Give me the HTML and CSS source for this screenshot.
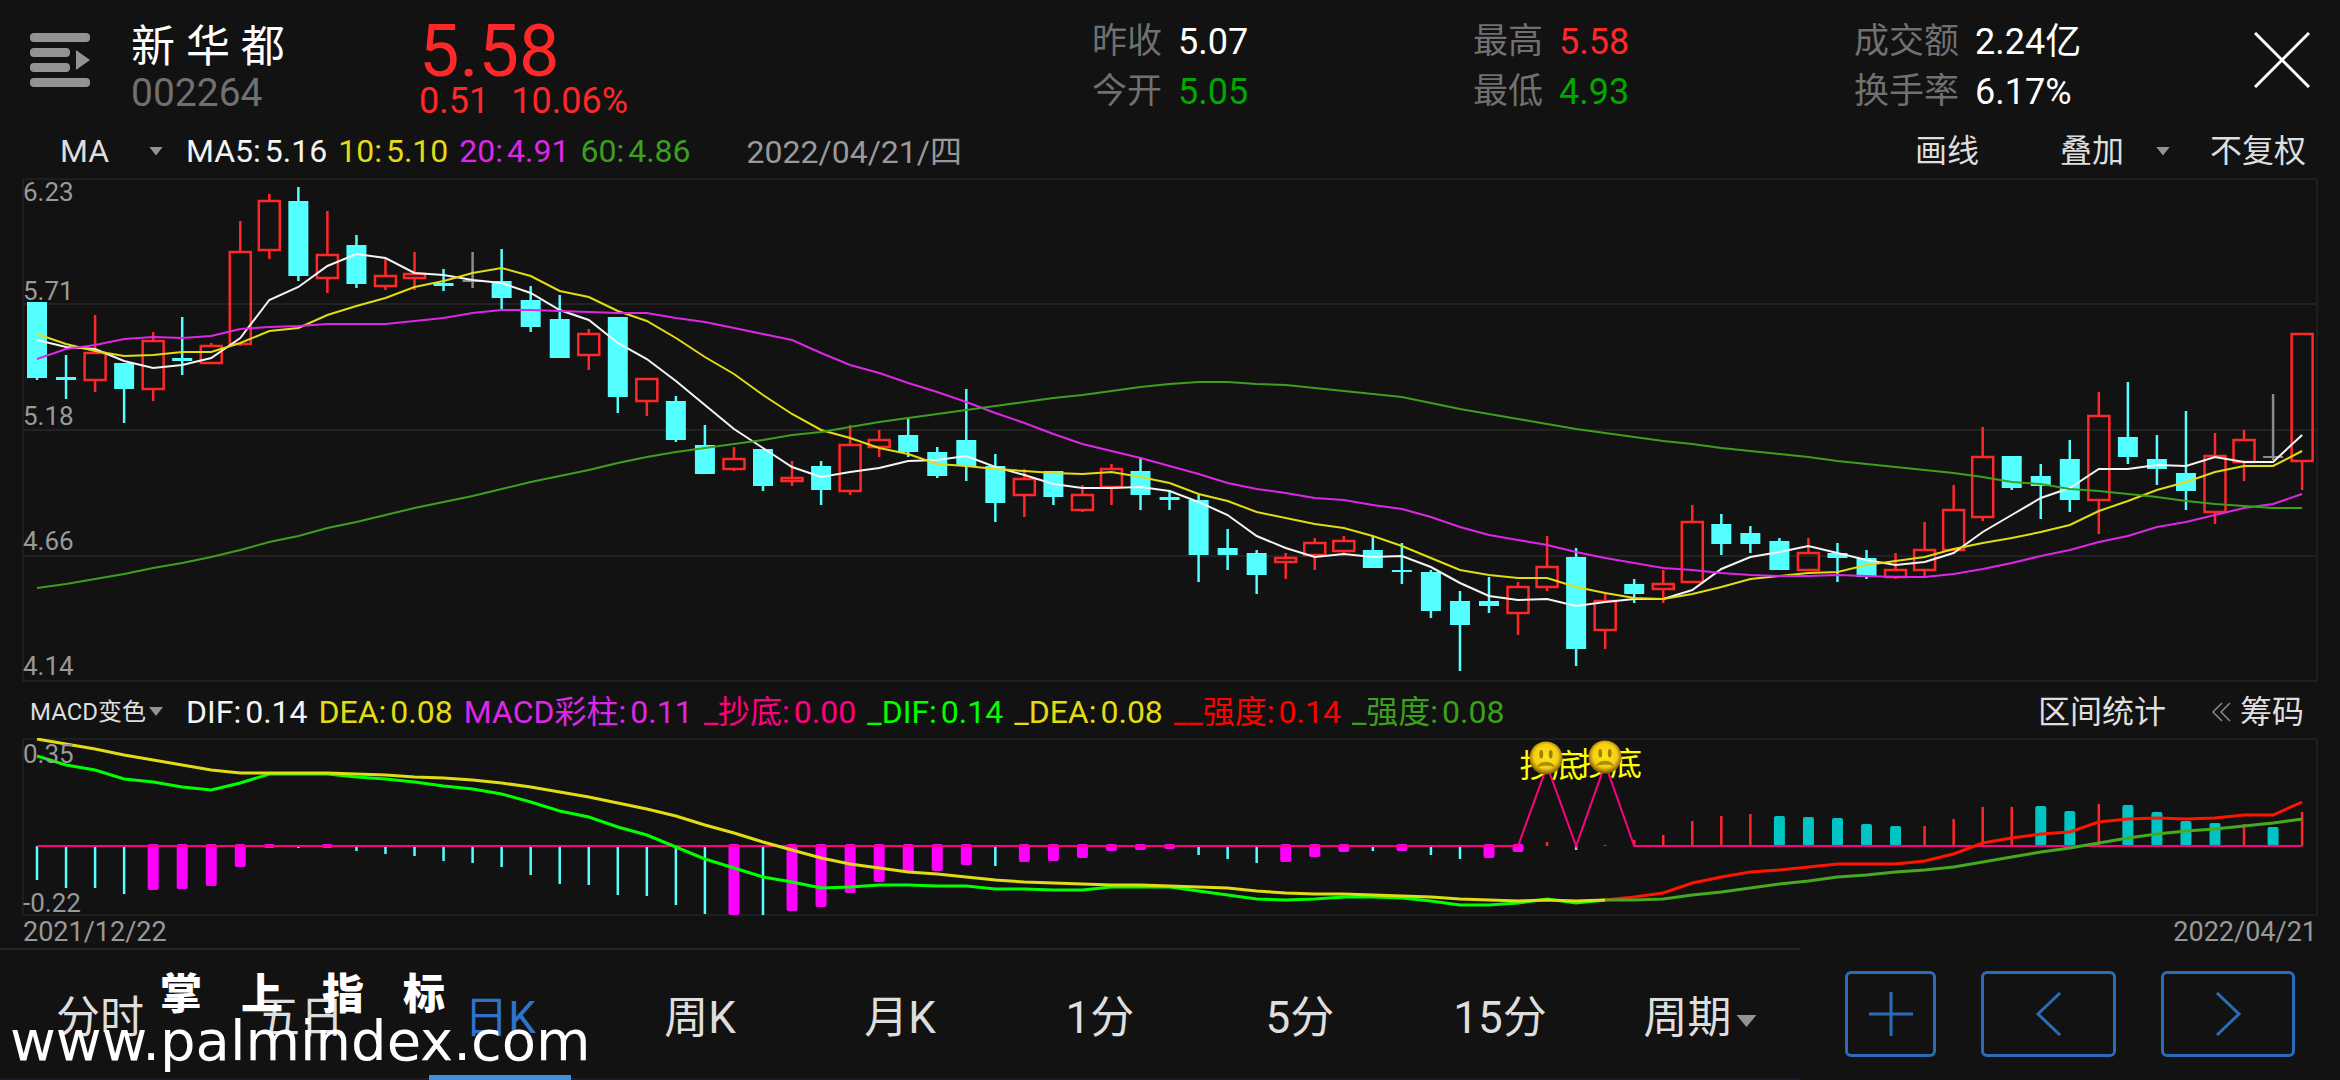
FILE: index.html
```html
<!DOCTYPE html>
<html lang="zh-CN">
<head>
<meta charset="utf-8">
<meta name="viewport" content="width=device-width, initial-scale=1">
<title>新华都 002264 日K</title>
<link rel="stylesheet" href="styles.css">
</head>
<body>
<div class="app">
  <header class="top">
    <button class="icon-btn menu" type="button" aria-label="列表">
      <svg width="60" height="54" viewBox="0 0 60 54"><g fill="#939393"><rect width="60" height="9" rx="4"/><rect y="15" width="40" height="9" rx="4"/><rect y="30" width="40" height="9" rx="4"/><rect y="45" width="60" height="9" rx="4"/><path d="M46 17L60 27L46 37Z"/></g></svg>
    </button>
    <div class="name"><h1>新 华 都</h1><span class="code">002264</span></div>
    <div class="price"><strong>5.58</strong><span class="change"><span>0.51</span><span>10.06%</span></span></div>
    <dl class="stats">
      <div><dt>昨收</dt><dd>5.07</dd></div>
      <div><dt>今开</dt><dd class="down">5.05</dd></div>
    </dl>
    <dl class="stats">
      <div><dt>最高</dt><dd class="up">5.58</dd></div>
      <div><dt>最低</dt><dd class="down">4.93</dd></div>
    </dl>
    <dl class="stats">
      <div><dt>成交额</dt><dd>2.24亿</dd></div>
      <div><dt>换手率</dt><dd>6.17%</dd></div>
    </dl>
    <button class="icon-btn close" type="button" aria-label="关闭">
      <svg width="56" height="56" viewBox="0 0 56 56"><path d="M1 1L55 55M55 1L1 55" stroke="#fff" stroke-width="3" fill="none"/></svg>
    </button>
  </header>

  <div class="bar">
    <button class="pick" type="button"><span>MA</span><i class="tri"></i></button>
    <p class="legend"><span class="white">MA5:<b>5.16</b></span><span class="yellow">10:<b>5.10</b></span><span class="violet">20:<b>4.91</b></span><span class="leaf">60:<b>4.86</b></span></p>
    <time class="day">2022/04/21/四</time>
    <div class="tools">
      <button type="button">画线</button>
      <button class="overlay" type="button">叠加<i class="tri"></i></button>
      <button type="button">不复权</button>
    </div>
  </div>

  <section class="chart kline" aria-label="日K线">
    <svg id="kline" viewBox="0 178 2340 504" preserveAspectRatio="none"></svg>
    <div class="axis"><span>6.23</span><span>5.71</span><span>5.18</span><span>4.66</span><span>4.14</span></div>
  </section>

  <div class="bar bar-macd">
    <button class="pick small" type="button"><span>MACD变色</span><i class="tri"></i></button>
    <p class="legend"><span class="white">DIF:<b>0.14</b></span><span class="yellow">DEA:<b>0.08</b></span><span class="violet">MACD彩柱:<b>0.11</b></span><span class="pink">_抄底:<b>0.00</b></span><span class="lime">_DIF:<b>0.14</b></span><span class="yellow">_DEA:<b>0.08</b></span><span class="red">__强度:<b>0.14</b></span><span class="leaf">_强度:<b>0.08</b></span></p>
    <div class="tools">
      <button type="button">区间统计</button>
      <button class="chips" type="button"><svg width="19" height="20" viewBox="0 0 19 20"><path d="M10 1L1 10L10 19M18 1L9 10L18 19" fill="none" stroke="#8a8a8a" stroke-width="1.5"/></svg>筹码</button>
    </div>
  </div>

  <section class="chart macd" aria-label="MACD">
    <svg id="macd" viewBox="0 738 2340 178" preserveAspectRatio="none"></svg>
    <div class="axis"><span>0.35</span><span>-0.22</span></div>
    <div class="signal signal-a">抄底<svg viewBox="0 0 36 36"><use href="#face"/></svg></div>
    <div class="signal signal-b">抄底<svg viewBox="0 0 36 36"><use href="#face"/></svg></div>
  </section>
  <div class="dates"><time>2021/12/22</time><time>2022/04/21</time></div>

  <footer class="bottom">
    <nav class="tabs">
      <a href="#m">分时</a><a href="#d5">五日</a><a class="on" href="#dk">日K</a><a href="#wk">周K</a><a href="#mk">月K</a><a href="#m1">1分</a><a href="#m5">5分</a><a href="#m15">15分</a><a href="#p">周期<i class="tri big"></i></a>
    </nav>
    <div class="steps">
      <button class="plus" type="button" aria-label="添加"><svg width="44" height="44" viewBox="0 0 44 44"><path d="M22 0V44M0 22H44"/></svg></button>
      <button type="button" aria-label="上一个"><svg width="44" height="44" viewBox="0 0 44 44"><path d="M33 1L11 22L33 43"/></svg></button>
      <button type="button" aria-label="下一个"><svg width="44" height="44" viewBox="0 0 44 44"><path d="M11 1L33 22L11 43"/></svg></button>
    </div>
    <div class="watermark"><span class="wm-name"><b>掌</b><b>上</b><b>指</b><b>标</b></span><span class="wm-url">www.palmindex.com</span></div>
  </footer>
</div>

<svg class="defs" aria-hidden="true">
  <defs>
    <radialGradient id="skin" cx="50%" cy="45%" r="52%"><stop offset="0" stop-color="#ffe51e"/><stop offset=".7" stop-color="#f6cd12"/><stop offset="1" stop-color="#8a6508"/></radialGradient>
    <g id="face"><circle cx="18" cy="18" r="17.5" fill="url(#skin)"/><ellipse cx="13" cy="14" rx="2" ry="4.5" fill="#9a8208"/><ellipse cx="23" cy="14" rx="2" ry="4.5" fill="#9a8208"/><path d="M9 27C12 21 24 21 27 27C21 25 15 25 9 27Z" fill="#a88c08" stroke="#a88c08"/></g>
  </defs>
</svg>
<script src="chart.js"></script>
</body>
</html>
```
FILE: styles.css
```css
* { box-sizing: border-box; }
body {
  margin: 0;
  background: #121212;
  color: #dedede;
  font-family: Roboto, "Noto Sans CJK SC", sans-serif;
  font-size: 32px;
  line-height: 40px;
}
h1, p, dl, dd { margin: 0; font-weight: 400; }
button { border: 0; padding: 0; background: none; color: inherit; font: inherit; cursor: pointer; }
svg { display: block; }
.app { min-height: 100vh; display: flex; flex-direction: column; overflow: hidden; }

.top { display: flex; align-items: flex-start; height: 128px; padding: 0 30px; }
.menu { margin-top: 33px; width: 101px; }
.name { width: 288px; padding-top: 21px; }
.name h1 { font-size: 44px; line-height: 52px; color: #fff; }
.code { display: block; font-size: 39px; line-height: 40px; color: #707070; }
.price { flex: 1; padding-top: 14px; color: #ff2828; }
.price strong { display: block; font-size: 72px; line-height: 76px; font-weight: 400; }
.change { display: flex; gap: 22px; font-size: 36px; line-height: 22px; }
.stats { width: 381px; padding-top: 17px; font-size: 36px; line-height: 50px; }
.stats div { display: flex; gap: 16px; }
.stats dt { font-size: 35px; color: #707070; }
.stats dd { color: #fff; }
.stats .up { color: #ff2828; }
.stats .down { color: #00a800; }
.close { margin-top: 32px; width: 75px; }
.close svg { margin-left: auto; }

.bar { display: flex; align-items: center; height: 50px; padding: 0 34px 4px 30px; white-space: pre; }
.pick { width: 156px; display: flex; align-items: center; justify-content: space-between; padding: 0 23px 0 30px; }
.pick.small { padding-left: 0; font-size: 24px; }
.tri { flex: none; width: 14px; height: 9px; background: #939393; clip-path: polygon(0 0, 100% 0, 50% 100%); }
.tri.big { width: 20px; height: 12px; margin: 6px 0 0 5px; }
.legend { display: flex; gap: 11px; }
.legend span { display: flex; gap: 4px; }
.legend b { font-weight: 400; }
.day { padding: 2px 0 0 56px; color: #999; }
.tools { margin-left: auto; display: flex; gap: 40px; }
.tools button { display: flex; align-items: center; }
.overlay { margin-left: 41px; }
.overlay .tri { margin-left: 32px; }
.bar-macd { height: 56px; padding: 3px 36px 0 30px; }
.bar-macd .tools { gap: 46px; }
.bar-macd .chips { gap: 9px; }
.white { color: #f4f4f4; }
.yellow { color: #e1dc14; }
.violet { color: #dc28e6; }
.leaf { color: #3ca01e; }
.pink { color: #ff0080; }
.lime { color: #00ff00; }
.red { color: #ff0000; }

.chart { position: relative; }
.chart > svg { width: 100%; }
.kline > svg { height: 504px; }
.macd > svg { height: 178px; }
.axis { position: absolute; inset: 0 23px; display: flex; flex-direction: column; justify-content: space-between; color: #999; font-size: 26px; line-height: 32px; pointer-events: none; }
.kline .axis { display: grid; grid-template-rows: 99px 125px 125px 125px 30px; }
.kline .axis span { margin-top: -2px; }
.macd .axis { bottom: -3px; }
.signal { position: absolute; transform: translateX(-50%); color: #ff0; font-size: 32px; line-height: 38px; white-space: nowrap; }
.signal svg { position: absolute; left: 10px; width: 34px; height: 34px; }
.signal-a { left: 66.3%; top: 9px; }
.signal-a svg { top: -6px; }
.signal-b { left: 68.8%; top: 7px; }
.signal-b svg { top: -5px; }
.defs { position: absolute; width: 0; height: 0; }
.dates { display: flex; justify-content: space-between; height: 32px; padding: 0 23px; color: #999; font-size: 27px; line-height: 32px; }

.bottom { position: relative; flex: 1; display: flex; }
.tabs { flex: 0 0 76.923%; display: grid; grid-template-columns: repeat(9, 1fr); border-top: 2px solid #24232f; border-bottom: 2px solid #1e1b26; }
.tabs a { display: flex; align-items: center; justify-content: center; height: 128px; padding-top: 8px; color: #dedede; font-size: 44px; line-height: 60px; text-decoration: none; white-space: nowrap; }
.tabs .on { position: relative; color: #2f72cc; }
.tabs .on::after { content: ""; position: absolute; bottom: -2px; left: 29px; right: 29px; height: 5px; background: #428fda; }
.steps { flex: 1; display: flex; align-items: flex-start; gap: 45px; padding: 23px 45px 0; }
.steps button { flex: 3; display: flex; align-items: center; justify-content: center; height: 86px; border: 3px solid #2b6cb8; border-radius: 6px; }
.steps .plus { flex: 2; }
.steps svg { fill: none; stroke: #2b6cb8; stroke-width: 3; }
.watermark { position: absolute; left: 10px; top: 13px; color: #fff; pointer-events: none; white-space: nowrap; }
.wm-name { display: flex; gap: 39px; padding-left: 150px; font-family: "Noto Sans CJK SC", sans-serif; font-size: 42px; line-height: 60px; }
.wm-name b { font-weight: 900; }
.wm-url { display: block; font-family: "DejaVu Sans", sans-serif; font-size: 56px; line-height: 40px; }
```
FILE: chart.js
```javascript
const X0 = 37, STEP = 29.04;
const x = i => X0 + STEP * i;
const pts = (ys, from = 0) => ys.map((y, k) => `${x(from + k).toFixed(1)},${y}`).join(' ');
const line = (ys, color, from = 0, w = 3) =>
  `<polyline points="${pts(ys, from)}" fill="none" stroke="${color}" stroke-width="${w}"/>`;
const rule = (x1, y1, x2, y2) =>
  `<path d="M${x1} ${y1}L${x2} ${y2}" stroke="#222" stroke-width="2"/>`;
const frame = (y, h) =>
  `<rect x="23" y="${y}" width="2294" height="${h}" fill="none" stroke="#1e1e1e" stroke-width="2"/>`;

// kind, high, body top, body bottom, low
const candles = `c 302 302 378 380|c 355 377 380 399|r 315 352 381 392|c 363 363 389 423|r 332 340 390 401
c 317 358 361 375|r 343 345 364 364|r 221 251 345 346|r 194 200 251 259|c 187 201 276 281
r 211 254 279 293|c 235 245 284 288|r 257 275 287 290|r 252 273 279 290|c 269 283 286 291
g 252 280 282 288|c 249 281 298 310|c 286 300 327 332|c 295 319 358 358|r 329 333 356 370
c 317 317 397 413|r 378 378 402 416|c 396 401 440 442|c 425 445 474 474|r 447 458 470 471
c 449 449 486 491|r 461 477 482 486|c 461 466 490 505|r 425 444 492 495|r 430 439 448 457
c 417 435 452 457|c 447 452 476 478|c 389 440 466 481|c 454 466 503 522|r 469 478 496 517
c 471 471 497 505|r 485 494 511 512|r 464 468 488 505|c 457 471 495 510|c 490 497 500 510
c 495 500 555 582|c 529 548 555 570|c 550 553 575 594|r 553 557 563 579|r 538 542 556 570
r 536 540 552 553|c 536 550 568 568|c 543 570 572 584|c 570 572 611 618|c 591 601 625 671
c 577 601 606 613|r 582 586 614 635|r 536 566 588 591|c 548 557 649 666|r 593 600 631 649
c 579 584 594 603|r 570 583 590 603|r 505 521 583 583|c 514 524 544 555|c 526 533 544 553
c 538 541 570 570|r 538 552 571 571|c 543 553 558 582|c 550 558 577 579|r 553 569 578 579
r 522 549 571 577|r 485 509 551 551|r 427 456 518 521|c 456 456 488 490|c 464 476 486 519
c 440 459 500 512|r 392 415 501 534|c 382 437 457 464|c 435 459 469 485|c 411 473 491 510
r 433 455 513 524|r 430 439 463 481|g 394 456 458 460|r 333 333 462 490`
  .split(/[|\n]/).map(s => s.trim().split(' '));

const ma5 = [340,347,349,361,368,365,358,338,300,287,266,254,258,273,275,280,283,293,310,320,343,359,381,405,429,448,467,477,472,468,461,460,456,467,475,484,488,488,487,491,502,515,536,548,557,554,557,556,567,583,596,600,599,606,602,599,599,590,569,557,552,546,553,560,565,562,553,532,515,498,488,469,469,465,466,457,462,462,435];
const ma10 = [334,344,351,356,355,352,352,343,331,328,315,306,298,287,281,273,268,276,291,297,311,321,338,357,374,395,414,430,438,448,454,464,466,469,471,473,474,472,477,483,494,501,512,518,524,528,536,546,558,570,575,578,578,587,593,598,599,594,587,579,576,573,572,565,561,557,549,543,538,532,525,511,501,490,482,472,466,466,451];
const ma20 = [359,349,345,339,337,338,336,329,327,326,324,324,324,321,318,313,310,310,311,312,313,313,318,322,328,334,340,353,365,373,383,392,402,413,423,434,444,451,458,466,474,483,489,493,498,500,505,509,517,527,535,540,545,552,558,563,568,570,573,575,576,576,575,576,577,577,574,569,563,556,550,542,536,527,522,515,508,504,494];
const ma60 = [588,584,579,574,568,563,557,550,542,536,528,522,515,508,502,496,489,482,476,470,463,457,452,448,444,440,435,432,427,422,418,414,410,406,402,398,395,391,387,384,382,382,384,385,388,391,394,397,403,409,414,419,424,429,433,437,441,444,448,451,454,457,461,464,467,470,473,477,482,484,489,491,494,497,501,504,506,508,508];

const colors = { c: '#54ffff', r: '#ff2828', g: '#8c8c8c' };
let out = frame(179, 502) + [304, 430, 556].map(y => rule(24, y, 2316, y)).join('');
candles.forEach(([k, h, t, b, l], i) => {
  const cx = x(i), col = colors[k];
  if (k === 'r') {
    out += `<path d="M${cx} ${h}V${t}M${cx} ${b}V${l}" stroke="${col}" stroke-width="2.5"/>`;
    out += `<rect x="${cx - 10.5}" y="${+t + 1}" width="21" height="${b - t - 2}" fill="none" stroke="${col}" stroke-width="2.5"/>`;
  } else {
    out += `<path d="M${cx} ${h}V${l}" stroke="${col}" stroke-width="2.5"/>`;
    out += `<rect x="${cx - 10}" y="${t}" width="20" height="${b - t}" fill="${col}"/>`;
  }
});
out += line(ma5, '#f4f4f4', 0, 2) + line(ma10, '#e1dc14', 0, 2) + line(ma20, '#dc28e6', 0, 2) + line(ma60, '#3ca01e', 0, 2);
document.getElementById('kline').innerHTML = out;

// t thin cyan, m wide magenta, r thin red, b wide teal
const bars = 't880 t888 t888 t894 m890 m889 m886 m867 m848 t848 m848 t851 t854 t856 t861 t863 t867 t875 t884 t885 t895 t896 t905 t914 m915 t915 m911 m907 m893 m882 m873 m871 m865 t866 m862 m861 m858 m851 m850 m849 t855 t859 t863 m862 m857 m852 t851 m851 t855 t859 m858 m852 r842 t850 r845 r840 r835 r821 r816 r814 b816 b817 b818 b824 b826 r826 r819 r807 r807 b806 b811 r804 b805 b812 b821 b823 r824 b827 r812'.split(' ');
const dif = [756,765,770,779,782,787,790,783,774,774,774,777,779,782,786,789,794,802,811,817,827,835,847,859,868,877,882,888,887,885,885,886,886,889,889,890,890,887,887,887,891,895,899,900,899,897,897,898,901,905,905,903,899,903,900];
const strong = [900,897,893,883,877,872,870,867,864,864,864,861,854,843,838,834,832,822,819,818,819,818,815,815,802];
const dea = [739,744,749,755,760,765,770,773,773,773,773,774,775,777,778,780,783,787,792,797,803,809,816,825,833,842,850,858,864,868,872,874,877,880,882,883,884,885,885,886,887,888,891,893,894,894,895,896,897,899,900,901,900,901,900];
const weak = [900,900,899,895,892,888,884,881,877,875,872,870,867,862,857,852,848,843,838,834,831,829,826,823,819];
const ZERO = 846;
const barColors = { t: '#54ffff', m: '#ff00ff', r: '#ff2828', b: '#00c4c4' };
out = frame(739, 176);
bars.forEach((s, i) => {
  const k = s[0], y = +s.slice(1), wide = k === 'm' || k === 'b', w = wide ? 11 : 2.5;
  const top = Math.min(y, ZERO) - (k === 'm' ? 2 : 0);
  out += `<rect x="${x(i) - w / 2}" y="${top}" width="${w}" height="${Math.max(y, ZERO) - top}" rx="${wide ? 2 : 0}" fill="${barColors[k]}"/>`;
});
const bottomLine = Array(79).fill(ZERO);
bottomLine[52] = 766;
bottomLine[54] = 764;
out += line(bottomLine, '#ff0080', 0, 2) + line(dif, '#00ff00') + line(dea, '#e1dc14')
  + line(strong, '#ff1400', 54) + line(weak, '#46aa1e', 54);
document.getElementById('macd').innerHTML = out;
```
